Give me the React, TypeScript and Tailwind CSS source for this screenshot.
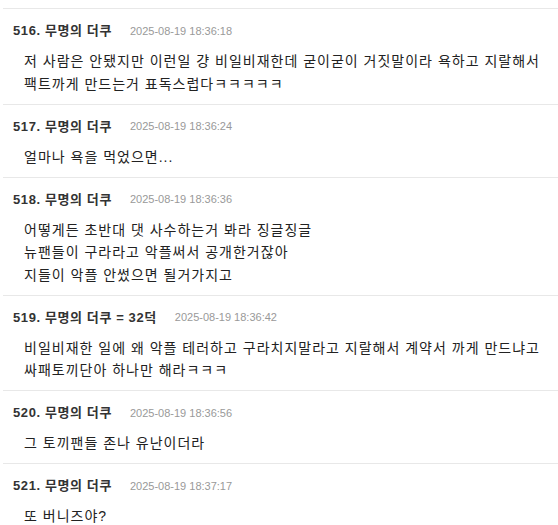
const comments = [
  {
    no: 516,
    name: "무명의 더쿠",
    date: "2025-08-19 18:36:18",
    lines: [
      "저 사람은 안됐지만 이런일 걍 비일비재한데 굳이굳이 거짓말이라 욕하고 지랄해서",
      "팩트까게 만드는거 표독스럽다ㅋㅋㅋㅋㅋ",
    ],
  },
  { no: 517, name: "무명의 더쿠", date: "2025-08-19 18:36:24", lines: ["얼마나 욕을 먹었으면..."] },
  {
    no: 518,
    name: "무명의 더쿠",
    date: "2025-08-19 18:36:36",
    lines: [
      "어떻게든 초반대 댓 사수하는거 봐라 징글징글",
      "뉴팬들이 구라라고 악플써서 공개한거잖아",
      "지들이 악플 안썼으면 될거가지고",
    ],
  },
  {
    no: 519,
    name: "무명의 더쿠 = 32덕",
    date: "2025-08-19 18:36:42",
    lines: [
      "비일비재한 일에 왜 악플 테러하고 구라치지말라고 지랄해서 계약서 까게 만드냐고",
      "싸패토끼단아 하나만 해라ㅋㅋㅋ",
    ],
  },
  { no: 520, name: "무명의 더쿠", date: "2025-08-19 18:36:56", lines: ["그 토끼팬들 존나 유난이더라"] },
  { no: 521, name: "무명의 더쿠", date: "2025-08-19 18:37:17", lines: ["또 버니즈야?"] },
];

export default function App() {
  return (
    <div
      className="w-[558px] h-[525px] overflow-hidden bg-white pt-2 pl-[3px]"
      style={{ fontFamily: '"Liberation Sans", "Noto Sans CJK KR", sans-serif' }}
    >
      <ul className="border-t border-[#e8e8e8]">
        {comments.map((c) => (
          <li key={c.no} className="border-b border-[#e8e8e8] pt-[12px] pb-[8.5px] pl-[10px]">
            <div className="flex items-center h-5">
              <span className="text-[13px] font-bold tracking-[0.6px] text-[#333]">
                {c.no}. {c.name}
              </span>
              <span className="ml-[18px] text-[11px] text-[#999]">{c.date}</span>
            </div>
            <div className="mt-[9px] pl-[11px] text-[14px] leading-[22.5px] tracking-[1px] text-[#222]">
              {c.lines.map((l, i) => (
                <p key={i}>{l}</p>
              ))}
            </div>
          </li>
        ))}
      </ul>
    </div>
  );
}
